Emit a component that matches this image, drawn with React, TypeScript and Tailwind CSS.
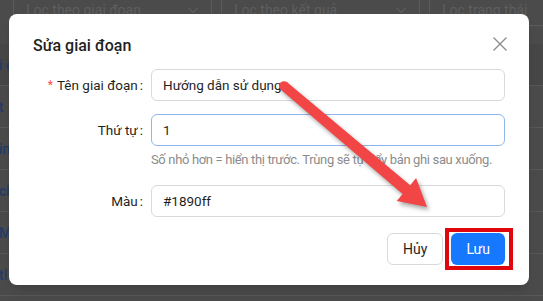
import React from 'react';

const font = { fontFamily: 'Roboto, "Noto Sans", sans-serif' };

const Filter = ({ label, last }: { label: string; last?: boolean }) => (
  <div className={`h-8 shrink-0 rounded-md border border-[#5b5b5b] px-3 flex items-center justify-between text-sm text-[#5e5e5e] ${last ? 'w-[130px]' : 'w-[199px]'}`}>
    <span>{label}</span>
    {!last && (
      <svg width="12" height="12" viewBox="0 0 12 12" fill="none" stroke="#5e5e5e" strokeWidth="1.2">
        <path d="M1.5 4l4.5 4.5L10.5 4" />
      </svg>
    )}
  </div>
);

const rows = ['i c', 't', 'in', 'ch', 'M', 'tl'];

const FormItem = ({
  label,
  required,
  children,
}: {
  label: string;
  required?: boolean;
  children: React.ReactNode;
}) => (
  <div className="flex">
    <div className="w-[118px] shrink-0 h-8 flex items-center justify-end text-[13.5px] text-[#1f1f1f]">
      {required && <span className="text-[#ff4d4f] mr-1 text-xs">*</span>}
      <span>{label}</span>
      <span className="ml-0.5 mr-2">:</span>
    </div>
    <div className="flex-1">{children}</div>
  </div>
);

export default function App() {
  return (
    <div className="relative w-[543px] h-[301px] overflow-hidden bg-[#4b4b4b]" style={font}>
      {/* dimmed page behind the dialog */}
      <div className="flex gap-[9px] pl-[13px] -mt-[6px]">
        <Filter label="Lọc theo giai đoạn" />
        <Filter label="Lọc theo kết quả" />
        <Filter label="Lọc trạng thái" last />
      </div>
      <div className="mt-[18px]">
        {rows.map((r, i) => (
          <div
            key={r}
            className={`h-[42px] flex items-center border-b border-[#585858] text-sm font-medium text-[#243c66] ${i === 0 ? 'bg-[#474747]' : ''}`}
          >
            <span className="-ml-[1px]">{r}</span>
          </div>
        ))}
      </div>

      {/* dialog */}
      <div className="absolute inset-0 pt-[14px] pl-[9px]">
        <div className="relative w-[520px] rounded-lg bg-white px-6 pt-5 pb-5 shadow-lg">
          <div className="text-base font-medium leading-6 text-[#1f1f1f]">Sửa giai đoạn</div>
          <button className="absolute top-[19px] right-[18px] w-[22px] h-[22px] flex items-center justify-center">
            <svg width="14" height="14" viewBox="0 0 14 14" stroke="#8a8a8a" strokeWidth="1.3" fill="none">
              <path d="M0.5 0.5l13 13M13.5 0.5l-13 13" />
            </svg>
          </button>

          <div className="mt-[11px]">
            <div className="mb-[13px]">
              <FormItem label="Tên giai đoạn" required>
                <div className="h-8 rounded-md border border-[#d9d9d9] px-[11px] flex items-center text-[13.5px] text-[#1f1f1f]">
                  Hướng dẫn sử dụng
                </div>
              </FormItem>
            </div>
            <div className="mb-[14px]">
              <FormItem label="Thứ tự">
                <div className="h-8 rounded-md border border-[#8fb6ee] px-[11px] flex items-center text-[13.5px] text-[#1f1f1f]">
                  1
                </div>
                <div className="pt-[3px] leading-[22px] text-[13px] tracking-[-0.35px] text-[#8c8c8c] whitespace-nowrap">
                  Số nhỏ hơn = hiển thị trước. Trùng sẽ tự đẩy bản ghi sau xuống.
                </div>
              </FormItem>
            </div>
            <FormItem label="Màu">
              <div className="h-8 rounded-md border border-[#d9d9d9] px-[11px] flex items-center text-[13.5px] text-[#1f1f1f]">
                #1890ff
              </div>
            </FormItem>
          </div>

          <div className="mt-4 flex justify-end gap-2">
            <button className="h-8 px-[15px] rounded-md border border-[#d9d9d9] bg-white text-sm text-[#1f1f1f]">
              Hủy
            </button>
            <div className="relative">
              <button className="h-8 px-[15px] rounded-md bg-[#1677ff] text-sm text-white">Lưu</button>
              <div className="absolute -left-[6px] -right-[8px] -top-[5px] -bottom-[5px] border-4 border-[#e0060e]" />
            </div>
          </div>
        </div>
      </div>

      {/* annotation arrow */}
      <svg
        className="absolute inset-0 pointer-events-none"
        width="543"
        height="301"
        style={{ filter: 'drop-shadow(2px 3px 2px rgba(0,0,0,0.35))' }}
      >
        <g fill="#f24646">
          <circle cx="284" cy="86" r="4.8" />
          <path d="M287.1 82.3 L410.2 185.3 L416.1 178.1 L427 207 L396.7 201 L402.6 193.9 L280.9 89.7 Z" />
        </g>
      </svg>
    </div>
  );
}
